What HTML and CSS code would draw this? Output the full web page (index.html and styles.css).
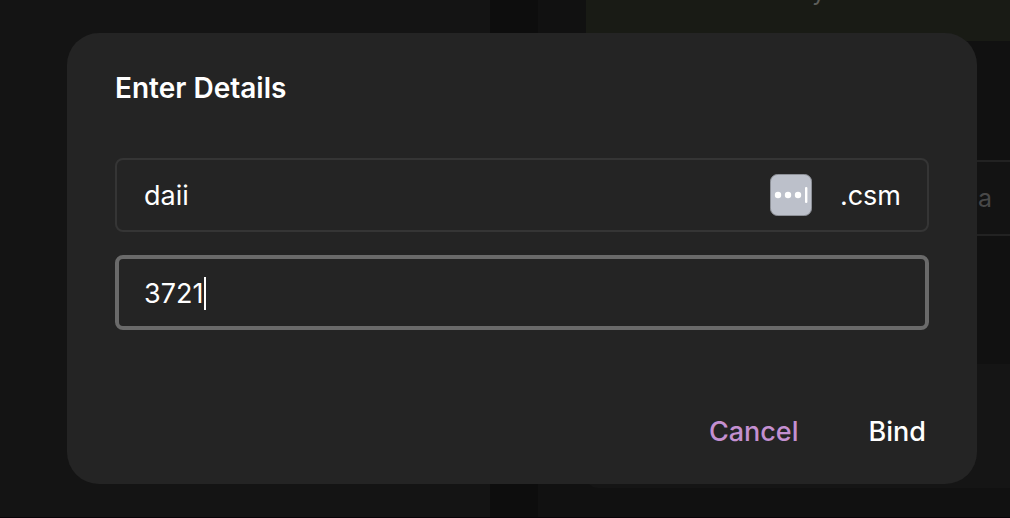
FILE: index.html
```html
<!DOCTYPE html>
<html lang="en">
<head>
<meta charset="utf-8">
<title>Enter Details</title>
<link rel="stylesheet" href="styles.css">
</head>
<body>
<div class="page" aria-hidden="true">
  <div class="page-side"></div>
  <div class="page-main">
    <div class="banner"><span>y</span></div>
    <div class="page-field">a</div>
    <div class="page-card"></div>
  </div>
</div>
<div class="overlay">
  <form class="dialog" role="dialog" aria-labelledby="dialog-title">
    <h1 class="title" id="dialog-title">Enter Details</h1>
    <div class="field">
      <input class="input" type="text" value="daii" aria-label="Name">
      <button class="fill" type="button" aria-label="Fill password">
        <svg viewBox="0 0 42 42" width="42" height="42">
          <rect x="0.5" y="0.5" width="41" height="41" rx="7" fill="#bcc0ca" stroke="#8d9097"/>
          <circle cx="8" cy="21" r="3.2" fill="#fff"/>
          <circle cx="18" cy="21" r="3.2" fill="#fff"/>
          <circle cx="28" cy="21" r="3.2" fill="#fff"/>
          <rect x="35" y="13" width="2.4" height="16" rx="1" fill="#fff"/>
        </svg>
      </button>
      <span class="suffix">.csm</span>
    </div>
    <div class="field field-active">
      <input class="input" type="text" value="3721" aria-label="Code">
      <span class="caret"></span>
    </div>
    <div class="actions">
      <button class="action action-cancel" type="button">Cancel</button>
      <button class="action" type="submit">Bind</button>
    </div>
  </form>
</div>
</body>
</html>
```
FILE: styles.css
```css
* {
  box-sizing: border-box;
}

body {
  margin: 0;
  min-height: 100vh;
  background: #0d0d0d;
  color: #fff;
  font-family: Inter, "Liberation Sans", sans-serif;
  font-size: 27px;
  line-height: 34px;
}

.page {
  position: absolute;
  inset: 0;
  display: grid;
  grid-template-columns: 490fr 472fr;
  gap: 48px;
  overflow: hidden;
  border-bottom: 1px solid #080408;
}

.page-side {
  background: #141414;
}

.page-main {
  padding-left: 48px;
  background: #111;
}

.banner {
  display: flex;
  height: 41px;
  padding-left: 226px;
  background: #191b15;
  color: #5c5d59;
  font-size: 24px;
  line-height: 24px;
}

.banner span {
  margin-top: -20px;
}

.page-field {
  margin-top: 119px;
  padding: 20px 18px;
  border: 2px solid #222;
  border-right: 0;
  background: #131313;
  color: #484848;
  font-size: 25px;
  line-height: 32px;
  text-align: right;
}

.page-card {
  height: 124px;
  margin-top: 128px;
  border-radius: 12px 0 0 12px;
  background: #151515;
}

.overlay {
  position: relative;
  padding: 33px 33px 35px 67px;
}

.dialog {
  display: flex;
  flex-direction: column;
  gap: 23px;
  padding: 38px 48px 29px;
  border-radius: 32px;
  background: #242424;
}

.title {
  margin: 0 0 30px;
  font-size: 28px;
  font-weight: 600;
  line-height: 34px;
}

.field {
  position: relative;
  display: flex;
  align-items: center;
  gap: 28px;
  height: 74px;
  padding: 2px 26px 0 27px;
  border: 2px solid #353535;
  border-radius: 8px;
}

.field-active {
  height: 75px;
  padding: 3px 24px 0 25px;
  border: 4px solid #6a6a6a;
}

.input {
  flex: 1;
  min-width: 0;
  padding: 0;
  border: 0;
  outline: 0;
  background: none;
  color: inherit;
  font: inherit;
}

.fill {
  display: flex;
  margin-bottom: 2px;
  padding: 0;
  border: 0;
  background: none;
}

.caret {
  position: absolute;
  top: 18px;
  left: 85px;
  width: 2px;
  height: 33px;
  background: #fff;
}

.actions {
  display: flex;
  justify-content: flex-end;
  gap: 22px;
  margin-top: 56px;
  margin-right: -21px;
}

.action {
  padding: 6px 24px;
  border: 0;
  background: none;
  color: #fff;
  font: inherit;
  font-weight: 500;
}

.action-cancel {
  color: #c490d1;
}
```
